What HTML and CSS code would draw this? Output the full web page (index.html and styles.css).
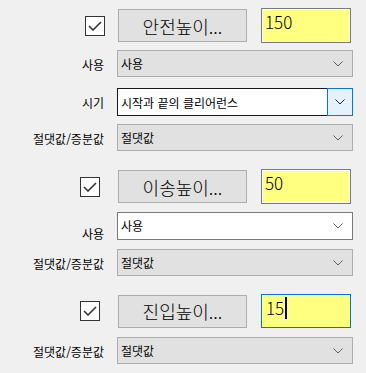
FILE: index.html
```html
<!DOCTYPE html>
<html lang="ko">
<head>
    <meta charset="UTF-8">
    <meta name="viewport" content="width=device-width, initial-scale=1.0">
    <title>높이 설정</title>
    <link rel="stylesheet" href="styles.css">
</head>
<body>
    <div class="panel">

        <div class="row head">
            <div class="lbl"><span class="chk first"><svg width="14" height="10" viewBox="0 0 14 10"><polyline points="1,5 5,9 13,1" fill="none" stroke="#333" stroke-width="1.6"/></svg></span></div>
            <div class="pair">
                <button class="btn">안전높이...</button>
                <div class="num">150</div>
            </div>
        </div>

        <div class="row gap7">
            <div class="lbl">사용</div>
            <div class="sel">사용<svg class="chev" width="10" height="6" viewBox="0 0 10 6"><polyline points="0.5,0.5 5,5 9.5,0.5" fill="none" stroke="#606060"/></svg></div>
        </div>

        <div class="row gap11">
            <div class="lbl">시기</div>
            <div class="combo">
                <div class="combo-text">시작과 끝의 클리어런스</div>
                <div class="combo-btn"><svg width="10" height="6" viewBox="0 0 10 6"><polyline points="0.5,0.5 5,5 9.5,0.5" fill="none" stroke="#222"/></svg></div>
            </div>
        </div>

        <div class="row gap9">
            <div class="lbl">절댓값/증분값</div>
            <div class="sel">절댓값<svg class="chev" width="10" height="6" viewBox="0 0 10 6"><polyline points="0.5,0.5 5,5 9.5,0.5" fill="none" stroke="#606060"/></svg></div>
        </div>

        <div class="row head gap18">
            <div class="lbl"><span class="chk"><svg width="14" height="10" viewBox="0 0 14 10"><polyline points="1,5 5,9 13,1" fill="none" stroke="#333" stroke-width="1.6"/></svg></span></div>
            <div class="pair">
                <button class="btn">이송높이...</button>
                <div class="num">50</div>
            </div>
        </div>

        <div class="row gap8 tall">
            <div class="lbl bottom">사용</div>
            <div class="sel white">사용<svg class="chev" width="10" height="6" viewBox="0 0 10 6"><polyline points="0.5,0.5 5,5 9.5,0.5" fill="none" stroke="#606060"/></svg></div>
        </div>

        <div class="row gap9">
            <div class="lbl">절댓값/증분값</div>
            <div class="sel">절댓값<svg class="chev" width="10" height="6" viewBox="0 0 10 6"><polyline points="0.5,0.5 5,5 9.5,0.5" fill="none" stroke="#606060"/></svg></div>
        </div>

        <div class="row head gap18 short">
            <div class="lbl"><span class="chk"><svg width="14" height="10" viewBox="0 0 14 10"><polyline points="1,5 5,9 13,1" fill="none" stroke="#333" stroke-width="1.6"/></svg></span></div>
            <div class="pair">
                <button class="btn">진입높이...</button>
                <div class="num focus">15<span class="caret"></span></div>
            </div>
        </div>

        <div class="row gap9">
            <div class="lbl">절댓값/증분값</div>
            <div class="sel">절댓값<svg class="chev" width="10" height="6" viewBox="0 0 10 6"><polyline points="0.5,0.5 5,5 9.5,0.5" fill="none" stroke="#606060"/></svg></div>
        </div>

    </div>
</body>
</html>
```

FILE: styles.css
```css
body {
    margin: 0;
    background: #f0f0f0;
    font-family: "Noto Sans CJK KR", "Noto Sans", sans-serif;
    color: #000;
}

.panel {
    padding-top: 8px;
}

.row {
    display: grid;
    grid-template-columns: 105px 236px;
    column-gap: 12px;
    height: 27px;
}

.row.head {
    height: 35px;
}

.row.head.short {
    height: 34px;
}

.row.tall {
    height: 28px;
}

.gap7 { margin-top: 7px; }
.gap8 { margin-top: 8px; }
.gap9 { margin-top: 9px; }
.gap11 { margin-top: 11px; }
.gap18 { margin-top: 18px; }

.lbl {
    display: flex;
    align-items: center;
    justify-content: flex-end;
    font-size: 12px;
    line-height: 14px;
    padding-top: 2px;
    padding-right: 1px;
}

.lbl.bottom {
    align-items: flex-end;
    margin-bottom: -1px;
}

.chk {
    box-sizing: border-box;
    width: 20px;
    height: 20px;
    margin-right: 4px;
    margin-top: -2px;
    border: 1px solid #333;
    background: #fff;
    display: flex;
    align-items: center;
    justify-content: center;
}

.chk.first {
    margin-right: -1px;
}

.pair {
    display: flex;
    align-items: center;
    gap: 14px;
    padding-left: 1px;
}

.btn {
    box-sizing: border-box;
    width: 129px;
    height: 33px;
    margin: 0;
    padding: 0;
    border: 1px solid #adadad;
    background: #e1e1e1;
    font-family: "Noto Sans CJK KR", sans-serif;
    font-size: 18px;
    font-weight: 300;
    line-height: 20px;
    color: #000;
}

.num {
    box-sizing: border-box;
    width: 90px;
    height: 35px;
    border: 1px solid #7a7a7a;
    box-shadow: inset 0 0 0 1px #fff;
    background: #ffff80;
    font-family: "Noto Sans CJK KR", "Noto Sans", sans-serif;
    font-size: 17px;
    font-weight: 300;
    line-height: 20px;
    padding: 3px 0 0 3px;
    display: flex;
    align-items: flex-start;
}

.row.short .num {
    height: 34px;
}

.num.focus {
    border-color: #0078d7;
    box-shadow: none;
    padding-left: 4px;
}

.caret {
    display: inline-block;
    width: 2px;
    height: 22px;
    margin-left: 1px;
    margin-top: -1px;
    background: #000080;
}

.sel {
    box-sizing: border-box;
    height: 100%;
    border: 1px solid #adadad;
    background: #e1e1e1;
    font-size: 12px;
    padding-left: 3px;
    display: flex;
    align-items: center;
    justify-content: space-between;
}

.sel.white {
    border-color: #7a7a7a;
    background: #fff;
    align-items: flex-start;
    padding-top: 4px;
}

.sel.white .chev {
    margin-top: 6px;
}

.chev {
    margin-right: 9px;
}

.combo {
    display: flex;
    height: 28px;
}

.combo-text {
    box-sizing: border-box;
    flex: 1;
    border: 1px solid #1a1a1a;
    border-right: none;
    background: #fff;
    font-size: 12px;
    padding-left: 3px;
    display: flex;
    align-items: center;
}

.combo-btn {
    box-sizing: border-box;
    width: 26px;
    border: 1px solid #0078d7;
    background: #e5f1fb;
    display: flex;
    align-items: center;
    justify-content: center;
}
```
